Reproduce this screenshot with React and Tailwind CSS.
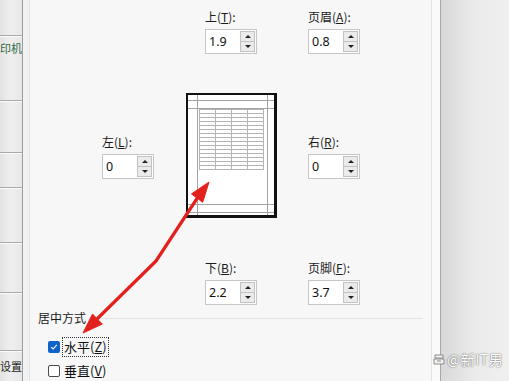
import React from 'react'

const cjk = "font-['Noto_Sans_CJK_SC','Noto_Sans',sans-serif]"

// left strip separators (y positions of the double lines)
const stripRows = [35, 65, 52, 35, 55, 50, 58, 31]

function Spinner() {
  return (
    <div className="my-px mr-px flex w-[15px] flex-col">
      <div className="flex flex-1 items-center justify-center border border-[#c2c2c2] bg-[#ebebeb]">
        <span className="h-0 w-0 border-x-[3px] border-b-[3px] border-x-transparent border-b-[#222]" />
      </div>
      <div className="-mt-px flex flex-1 items-center justify-center border border-[#c2c2c2] bg-[#ebebeb]">
        <span className="h-0 w-0 border-x-[3px] border-t-[3px] border-x-transparent border-t-[#222]" />
      </div>
    </div>
  )
}

function Field({ name, hot, value }) {
  return (
    <div className="w-[52px]">
      <div className={`mb-1 h-4 whitespace-nowrap text-[12px] leading-4 text-[#1b1b1b] ${cjk}`}>
        {name}(<u>{hot}</u>):
      </div>
      <div className="flex h-[25px] border border-[#c6c6c6] bg-white">
        <span className="flex-1 pl-[3px] font-['Noto_Sans',sans-serif] text-[12.5px] leading-[23px] text-[#111]">
          {value}
        </span>
        <Spinner />
      </div>
    </div>
  )
}

function PagePreview() {
  const rows = []
  for (let y = 16; y <= 76; y += 4) rows.push(y)
  const cols = [13, 29, 45, 61, 77]
  return (
    <svg width="91" height="125" viewBox="0 0 91 125" className="block">
      <rect x="0" y="0" width="91" height="125" fill="#111" />
      <rect x="2" y="2" width="86" height="120" fill="#fff" />
      <g stroke="#a3a3a3" strokeWidth="1">
        <line x1="11.5" y1="2" x2="11.5" y2="122" />
        <line x1="81.5" y1="2" x2="81.5" y2="122" />
        <line x1="2" y1="7.5" x2="88" y2="7.5" />
        <line x1="2" y1="15.5" x2="88" y2="15.5" />
        <line x1="2" y1="111.5" x2="88" y2="111.5" />
        <line x1="2" y1="119.5" x2="88" y2="119.5" />
      </g>
      <g stroke="#b4b4b4" strokeWidth="1">
        {rows.map((y) => (
          <line key={y} x1="13" y1={y + 0.5} x2="77" y2={y + 0.5} />
        ))}
        {cols.map((x) => (
          <line key={x} x1={x + 0.5} y1="16" x2={x + 0.5} y2="77" />
        ))}
      </g>
    </svg>
  )
}

function Checkbox({ checked }) {
  if (checked) {
    return (
      <span className="flex h-[12px] w-[12px] items-center justify-center rounded-[2px] bg-[#0f63c9]">
        <svg width="8" height="8" viewBox="0 0 8 8">
          <path d="M1.2 4.2 L3.1 6 L6.8 1.8" fill="none" stroke="#fff" strokeWidth="1.1" />
        </svg>
      </span>
    )
  }
  return <span className="h-[12px] w-[12px] rounded-[2px] border border-[#4a4a4a] bg-white" />
}

export default function App() {
  return (
    <div className="relative flex h-[381px] w-[509px] overflow-hidden bg-[#f7f7f7]">
      {/* left strip of the parent window */}
      <div className="flex w-[23px] flex-col border-r border-[#9e9e9e] bg-gradient-to-r from-[#e3e3e3] via-[#efefef] to-[#e7e7e7]">
        {stripRows.map((h, i) => (
          <div
            key={i}
            style={{ height: h }}
            className={`shrink-0 overflow-hidden ${i > 0 ? 'border-t border-[#a9a9a9] shadow-[inset_0_1px_0_#fbfbfb]' : ''}`}
          >
            {i === 1 && (
              <div className={`mt-[5px] whitespace-nowrap text-[11px] leading-[14px] text-[#2f6a48] ${cjk}`}>
                印机
              </div>
            )}
            {i === 7 && (
              <div className={`mt-[8px] whitespace-nowrap text-[11px] leading-[14px] text-[#222] ${cjk}`}>
                设置
              </div>
            )}
          </div>
        ))}
      </div>
      <div className="w-[7px] border-r border-[#e2e2e2] bg-[#f2f2f2]" />

      {/* dialog body */}
      <div className="flex w-[401px] flex-col">
        <div className="flex h-[93px] gap-[51px] pl-[175px] pt-[9px]">
          <Field name="上" hot="T" value="1.9" />
          <Field name="页眉" hot="A" value="0.8" />
        </div>

        <div className="flex h-[125px] items-start pl-[72px]">
          <div className="mt-[41px]">
            <Field name="左" hot="L" value="0" />
          </div>
          <div className="ml-[32px]">
            <PagePreview />
          </div>
          <div className="ml-[31px] mt-[41px]">
            <Field name="右" hot="R" value="0" />
          </div>
        </div>

        <div className="flex gap-[51px] pl-[175px] pt-[42px]">
          <Field name="下" hot="B" value="2.2" />
          <Field name="页脚" hot="F" value="3.7" />
        </div>

        <div className="mr-[8px] mt-[5px] flex items-center pl-[8px]">
          <span className={`text-[12px] leading-4 text-[#1b1b1b] ${cjk}`}>居中方式</span>
          <div className="ml-[3px] h-px flex-1 bg-[#e2e2e2]" />
        </div>

        <div className="mt-[11px] flex flex-col gap-1 pl-[18px]">
          <div className="flex h-[20px] items-center">
            <Checkbox checked />
            <span className={`ml-[2px] flex h-[20px] items-center border border-dotted border-[#333] px-[1px] text-[13px] text-[#111] ${cjk}`}>
              水平(<u>Z</u>)
            </span>
          </div>
          <div className="flex h-[20px] items-center">
            <Checkbox />
            <span className={`ml-[4px] text-[13px] text-[#111] ${cjk}`}>
              垂直(<u>V</u>)
            </span>
          </div>
        </div>
      </div>

      {/* right edge of dialog and background window */}
      <div className="w-[9px] border-l border-[#e3e3e3] bg-[#fafafa]" />
      <div className="flex-1 border-l border-[#a6a6a6] bg-gradient-to-r from-[#d8d8d8] via-[#ebebeb] to-[#efefef]" />

      {/* red annotation arrow */}
      <svg className="pointer-events-none absolute left-0 top-0" width="509" height="381" viewBox="0 0 509 381">
        <g fill="#e3211c" stroke="#e3211c">
          <path d="M198 197 L156 261 L97 319" fill="none" strokeWidth="3.2" strokeLinejoin="round" />
          <polygon points="209,182 202.7,202.3 191.5,193.9" strokeWidth="1" strokeLinejoin="round" />
          <polygon points="83,333 102.3,324.1 92.5,314.1" strokeWidth="1" strokeLinejoin="round" />
        </g>
      </svg>

      {/* watermark */}
      <div className="absolute left-[433px] top-[351px] flex items-center gap-[2px]">
        <svg width="12" height="14" viewBox="0 0 12 14">
          <path d="M2 3 h8 v3 h-8 z M1 7 h10 v5 h-10 z" fill="#f4f4f4" stroke="#8a8a8a" strokeWidth="1" />
          <path d="M4 9 h4" stroke="#8a8a8a" strokeWidth="1" />
        </svg>
        <span className={`text-[14px] leading-4 tracking-[0.5px] text-white [text-shadow:0_0_1px_#666,0_0_2px_#888] ${cjk}`}>
          @新IT男
        </span>
      </div>
    </div>
  )
}
